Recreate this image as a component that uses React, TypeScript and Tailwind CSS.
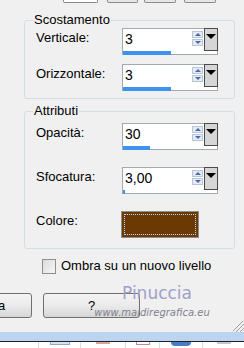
import React from 'react';

function SpinInput({ value, bar }: { value: string; bar: number }) {
  return (
    <div className="w-[96px] h-[27px] border border-[#a3a9b1] bg-white flex flex-col">
      <div className="flex h-[22px]">
        <div className="flex-1 pl-[2px] pt-[2px] text-[14px] leading-[17px] text-black">{value}</div>
        <div className="w-[11px] flex flex-col pt-[2px] gap-[1px] mr-[1px]">
          <div className="h-[7px] border border-[#b8c6d8] bg-[#e4ebf5] flex items-center justify-center">
            <div className="w-0 h-0 border-l-[3px] border-r-[3px] border-b-[3px] border-l-transparent border-r-transparent border-b-[#4b6aa8]" />
          </div>
          <div className="h-[7px] border border-[#b8c6d8] bg-[#e4ebf5] flex items-center justify-center">
            <div className="w-0 h-0 border-l-[3px] border-r-[3px] border-t-[3px] border-l-transparent border-r-transparent border-t-[#4b6aa8]" />
          </div>
        </div>
        <div className="w-[14px] h-[23px] -mt-px -mr-px border border-[#4a4a4a] bg-[#d6d6d6] flex justify-center pt-[5px]">
          <div className="w-0 h-0 border-l-[5px] border-r-[5px] border-t-[5px] border-l-transparent border-r-transparent border-t-black" />
        </div>
      </div>
      <div className="h-[4px] mt-auto">
        <div className="h-[4px] bg-[#3d93ee]" style={{ width: bar }} />
      </div>
    </div>
  );
}

function Row({ label, children, className }: { label: string; children: React.ReactNode; className?: string }) {
  return (
    <div className={'flex items-start ' + (className ?? '')}>
      <div className="w-[97px] pl-[11px] pt-[2px]">{label}</div>
      {children}
    </div>
  );
}

export default function App() {
  return (
    <div
      className="w-[244px] h-[348px] bg-[#f0f0f0] overflow-hidden relative flex flex-col text-[13px] leading-[16px] text-black"
      style={{ fontFamily: '"Liberation Sans", Arial, sans-serif' }}
    >
      {/* bottoms of buttons above */}
      <div className="flex h-[3px] pl-[63px]">
        <div className="w-[35px] border border-t-0 border-[#8a8a8a] rounded-b-[2px] bg-white" />
        <div className="w-[31px] ml-[9px] border border-t-0 border-[#8a8a8a] rounded-b-[2px] bg-[#e6e6e6]" />
        <div className="w-[32px] ml-[6px] border border-t-0 border-[#8a8a8a] rounded-b-[2px] bg-[#e6e6e6]" />
        <div className="w-[32px] ml-[8px] border border-t-0 border-[#8a8a8a] rounded-b-[2px] bg-[#e6e6e6]" />
      </div>

      <fieldset className="mt-[9px] ml-[24px] w-[211px] border border-[#d5dde4] rounded-[3px] pb-[7px]">
        <legend className="ml-[8px] px-[1px] leading-[16px]">Scostamento</legend>
        <Row label="Verticale:">
          <SpinInput value="3" bar={48} />
        </Row>
        <Row label="Orizzontale:" className="mt-[9px]">
          <SpinInput value="3" bar={48} />
        </Row>
      </fieldset>

      <fieldset className="mt-[4px] ml-[24px] w-[211px] border border-[#d5dde4] rounded-[3px] pb-[10px]">
        <legend className="ml-[8px] px-[1px] leading-[16px]">Attributi</legend>
        <Row label="Opacità:" className="mt-[4px]">
          <SpinInput value="30" bar={27} />
        </Row>
        <Row label="Sfocatura:" className="mt-[17px]">
          <SpinInput value="3,00" bar={2} />
        </Row>
        <Row label="Colore:" className="mt-[17px]">
          <div className="w-[78px] h-[27px] -ml-px border border-[#8d8d8d] bg-[#6b3a02] p-[2px]">
            <div className="w-full h-full border border-dotted border-[#c8d8f0]" />
          </div>
        </Row>
      </fieldset>

      <div className="flex items-center mt-[9px] ml-[42px]">
        <div className="w-[14px] h-[15px] border border-[#8e8f8f] bg-gradient-to-br from-[#dcdcdc] to-[#f6f6f6]" />
        <span className="ml-[5px]">Ombra su un nuovo livello</span>
      </div>

      <div className="flex mt-[19px] ml-[-65px] gap-[11px]">
        <div className="w-[97px] h-[25px] border border-[#707070] rounded-[3px] bg-gradient-to-b from-[#f3f3f3] via-[#ebebeb] to-[#d6d6d6] flex items-center justify-center">
          Annulla
        </div>
        <div className="w-[97px] h-[25px] border border-[#707070] rounded-[3px] bg-gradient-to-b from-[#f3f3f3] via-[#ebebeb] to-[#d6d6d6] flex items-center justify-center">
          ?
        </div>
      </div>

      {/* resize grip */}
      <div className="flex justify-end mt-[2px] h-[12px]">
        <svg width="12" height="12" viewBox="0 0 12 12">
          <line x1="11" y1="1" x2="1" y2="11" stroke="#a0a0a0" strokeWidth="1" />
          <line x1="12" y1="4" x2="4" y2="12" stroke="#a0a0a0" strokeWidth="1" />
          <line x1="12" y1="8" x2="8" y2="12" stroke="#a0a0a0" strokeWidth="1" />
        </svg>
      </div>

      {/* taskbar strip */}
      <div className="h-[9px] bg-[#bcd4ee]" />
      <div className="h-[1px] bg-[#1a2230]" />
      <div className="flex-1 bg-white flex">
        <div className="w-[39px] border-r border-[#dcdcdc]" />
        <div className="w-[42px] border-r border-[#dcdcdc] flex justify-center">
          <div className="w-[20px] h-[3px] border border-t-0 border-[#9aa6b8] bg-[#d6e2f2]" />
        </div>
        <div className="w-[45px] border-r border-[#dcdcdc] flex justify-center">
          <div className="w-[14px] h-[2px] bg-[#d8a898]" />
        </div>
        <div className="w-[34px] border-r border-[#dcdcdc] flex justify-center">
          <div className="w-[14px] h-[3px] border border-t-0 border-[#cc8888]" />
        </div>
        <div className="w-[43px] border-r border-[#dcdcdc] flex justify-center">
          <div className="w-[20px] h-[4px] rounded-b-full bg-[#4a7cc6]" />
        </div>
        <div className="flex-1 flex justify-center">
          <div className="w-[14px] h-[2px] bg-[#c8c8c8]" />
        </div>
      </div>

      {/* watermark */}
      <div className="absolute left-[90px] top-[283px] w-[124px] flex flex-col items-center pointer-events-none">
        <div
          className="text-[17px] leading-[20px] text-[#a0a0c8] pl-[10px]"
          style={{ fontFamily: '"DejaVu Sans", sans-serif' }}
        >
          Pinuccia
        </div>
        <div
          className="text-[10px] leading-[12px] italic text-[#80808e] mt-[4px]"
          style={{ fontFamily: '"DejaVu Sans", sans-serif' }}
        >
          www.maidiregrafica.eu
        </div>
      </div>
    </div>
  );
}
